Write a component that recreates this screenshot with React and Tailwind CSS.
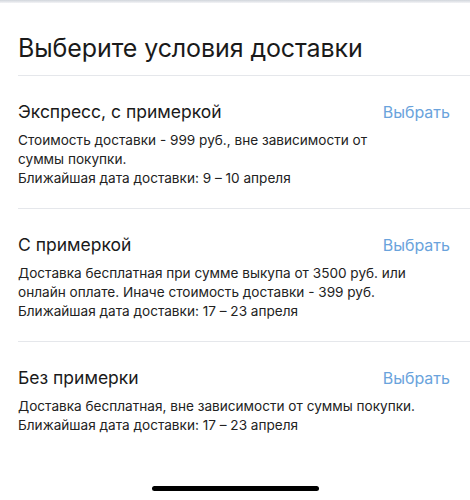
const options = [
  {
    title: 'Экспресс, с примеркой',
    lines: ['Стоимость доставки - 999 руб., вне зависимости от', 'суммы покупки.', 'Ближайшая дата доставки: 9 – 10 апреля'],
  },
  {
    title: 'С примеркой',
    lines: [
      'Доставка бесплатная при сумме выкупа от 3500 руб. или',
      'онлайн оплате. Иначе стоимость доставки - 399 руб.',
      'Ближайшая дата доставки: 17 – 23 апреля',
    ],
  },
  {
    title: 'Без примерки',
    lines: ['Доставка бесплатная, вне зависимости от суммы покупки.', 'Ближайшая дата доставки: 17 – 23 апреля'],
  },
]

export default function App() {
  return (
    <main
      className="relative h-[500px] w-[470px] overflow-hidden bg-white text-[#1a1a1a]"
      style={{ fontFamily: 'Inter, "Noto Sans", sans-serif' }}
    >
      <div className="h-[3px] bg-gradient-to-b from-gray-300 to-gray-100" />
      <div className="pl-[18px]">
        <h1 className="pt-[30px] pb-[12px] text-[25px] font-normal leading-[30px] tracking-[-0.1px]">
          Выберите условия доставки
        </h1>
        {options.map((opt) => (
          <section key={opt.title} className="border-t border-gray-200 pt-[22px] pb-[20px] pr-[20px]">
            <div className="flex items-center justify-between">
              <h2 className="text-[17.5px] leading-[28px]">{opt.title}</h2>
              <button className="text-[16px] text-[#6aa3dc]">Выбрать</button>
            </div>
            <p className="mt-[5px] text-[13.6px] leading-[19px] text-[#222]">
              {opt.lines.map((l) => (
                <span key={l} className="block">
                  {l}
                </span>
              ))}
            </p>
          </section>
        ))}
      </div>
      <div className="absolute bottom-[9px] left-[152px] h-[5px] w-[167px] rounded-full bg-black" />
    </main>
  )
}
